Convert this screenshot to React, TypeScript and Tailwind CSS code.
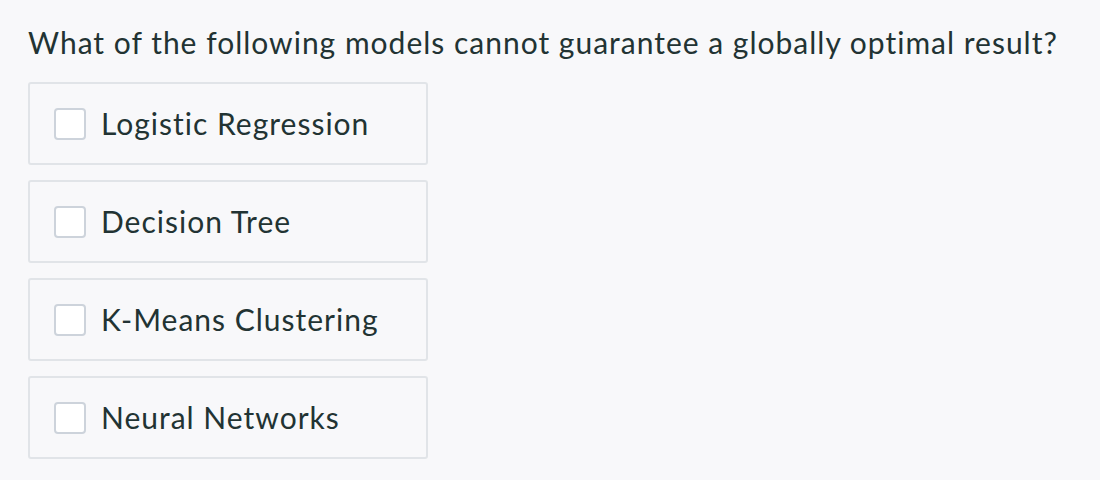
const options = ['Logistic Regression', 'Decision Tree', 'K-Means Clustering', 'Neural Networks'];

export default function App() {
  return (
    <div
      className="min-h-[480px] bg-[#f8f8fa] px-[28px] pt-[22px] text-[#223333]"
      style={{ fontFamily: 'Lato, "Liberation Sans", sans-serif' }}
    >
      <h1 className="text-[30px] leading-[40px] tracking-[1px]">
        What of the following models cannot guarantee a globally optimal result?
      </h1>
      <div className="mt-[20px] flex flex-col gap-[15px]">
        {options.map((label) => (
          <label
            key={label}
            className="flex h-[83px] w-[400px] cursor-pointer items-center gap-[15px] rounded-[3px] border-2 border-[#e1e4e8] pl-[24px]"
          >
            <span className="h-[32px] w-[32px] rounded-[4px] border-2 border-[#cdd3db] bg-white" />
            <span className="text-[30px] tracking-[1px]">{label}</span>
          </label>
        ))}
      </div>
    </div>
  );
}
